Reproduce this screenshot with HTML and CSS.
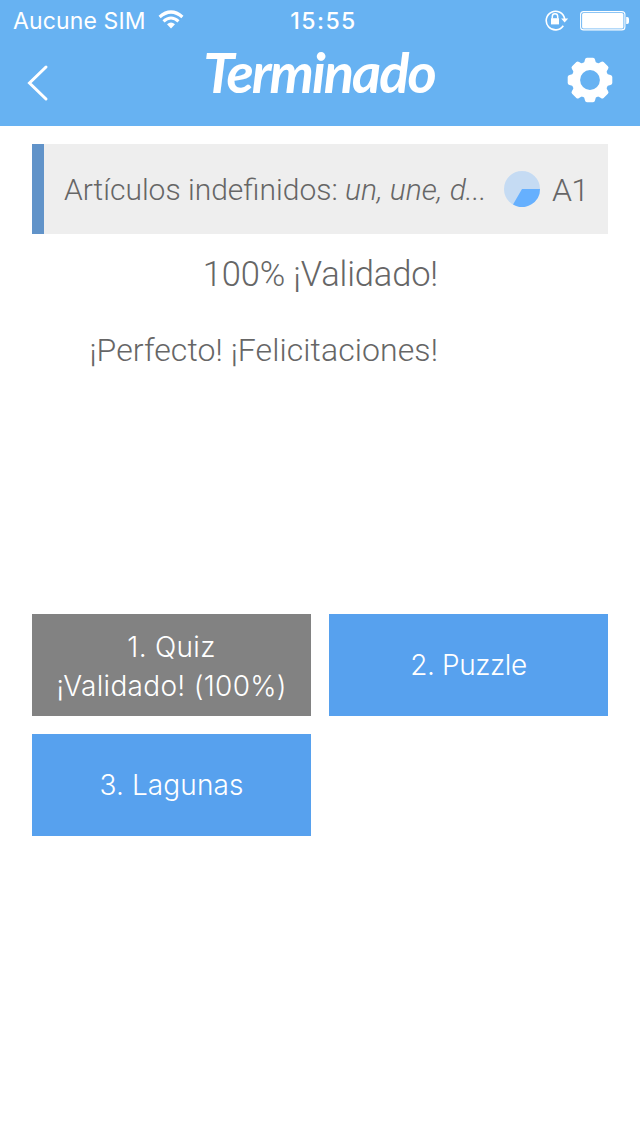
FILE: index.html
```html
<!DOCTYPE html>
<html lang="es">
<head>
<meta charset="utf-8">
<title>Terminado</title>
<link rel="stylesheet" href="styles.css">
</head>
<body>
<header class="header">
  <div class="status">
    <div class="carrier">
      <span class="carrier-name">Aucune SIM</span>
      <svg class="wifi" width="26" height="20" viewBox="0 0 26 20" fill="none" stroke="#fff">
        <path d="M1.6 7Q13-3 24.4 7" stroke-width="3.2"/>
        <path d="M5.5 11.3Q13 4.7 20.5 11.3" stroke-width="3.1"/>
        <path d="M9 14.2Q13 10.8 17 14.2L13 18.6Z" fill="#fff" stroke="none"/>
      </svg>
    </div>
    <span class="clock">15:55</span>
    <div class="indicators">
      <svg class="lock" width="24" height="22" viewBox="0 0 24 22" fill="none" stroke="#fff">
        <path d="M18.3 16.7A9.3 9.3 0 1 1 19.7 10" stroke-width="1.6"/>
        <path d="M16.1 9.6H23.2L19.6 13.4Z" fill="#fff" stroke="none"/>
        <path d="M6 9.2H14V15.4H6Z" fill="#fff" stroke="none"/>
        <path d="M7.3 9.5V7.4Q7.3 4.8 10 4.8T12.7 7.4V9.5" stroke-width="1.5"/>
      </svg>
      <svg width="50" height="20" viewBox="0 0 50 20">
        <rect x=".6" y=".6" width="44.3" height="18.3" rx="3" fill="none" stroke="#fff" stroke-width="1.1"/>
        <rect x="2.1" y="2.1" width="41.3" height="15.3" rx="1.5" fill="#fff"/>
        <path d="M46.2 6H47.2Q49 6 49 8V11Q49 13 47.2 13H46.2Z" fill="#fff"/>
      </svg>
    </div>
  </div>
  <div class="nav">
    <svg class="back" width="24" height="38" viewBox="0 0 24 38">
      <path d="M20 3L3.5 19L20 35" fill="none" stroke="#fff" stroke-width="3" stroke-linecap="round" stroke-linejoin="miter"/>
    </svg>
    <h1 class="title">Terminado</h1>
    <svg class="gear" width="46" height="46" viewBox="-23 -23 46 46" fill="#fff">
      <defs><path id="tooth" d="M-6.5-15L-5-20.5Q-4.7-22.3-3-22.3H3Q4.7-22.3 5-20.5L6.5-15Z"/></defs>
      <circle r="14.2" fill="none" stroke="#fff" stroke-width="8.6"/>
      <use href="#tooth"/><use href="#tooth" transform="rotate(45)"/><use href="#tooth" transform="rotate(90)"/><use href="#tooth" transform="rotate(135)"/><use href="#tooth" transform="rotate(180)"/><use href="#tooth" transform="rotate(225)"/><use href="#tooth" transform="rotate(270)"/><use href="#tooth" transform="rotate(315)"/>
    </svg>
  </div>
</header>
<main class="content">
  <section class="lesson">
    <span class="lesson-name">Artículos indefinidos: <em>un, une, d...</em></span>
    <svg class="progress" width="36" height="36" viewBox="-18 -18 36 36">
      <circle r="18" fill="#c5dbf3"/>
      <path d="M0 0H18A18 18 0 0 1-9 15.59Z" fill="#66b0fe"/>
    </svg>
    <span class="level">A1</span>
  </section>
  <section class="result">
    <p class="score">100% ¡Validado!</p>
    <p class="praise">¡Perfecto! ¡Felicitaciones!</p>
  </section>
  <section class="exercises">
    <button class="exercise done"><span>1. Quiz</span><span>¡Validado! (100%)</span></button>
    <button class="exercise puzzle"><span>2. Puzzle</span></button>
    <button class="exercise gaps"><span>3. Lagunas</span></button>
  </section>
</main>
</body>
</html>
```

FILE: styles.css
```css
* { box-sizing: border-box; }
body { margin: 0; background: #fff; color: #666; font-family: Roboto, "Liberation Sans", sans-serif; font-weight: 300; }
.header { height: 126px; background: #67b2f2; color: #fff; }
.status { display: grid; grid-template-columns: 1fr auto 1fr; align-items: center; height: 40px; padding: 1px 10px 0 13px; font: 400 23px/40px Inter, sans-serif; }
.carrier { display: flex; align-items: center; gap: 12px; }
.wifi { margin-top: -2px; }
.carrier-name { letter-spacing: .12px; }
.clock { font-weight: 500; letter-spacing: 1.5px; padding-left: 4px; }
.indicators { display: flex; justify-content: flex-end; align-items: center; gap: 11px; }
.lock { margin-top: -2px; }
.nav { display: flex; justify-content: space-between; align-items: center; height: 80px; padding: 0 27px 0 26px; }
.back { margin-top: 5px; }
.title { margin: -16px 0 0 21px; font: italic 700 56px/70px Lato, "Liberation Sans", sans-serif; letter-spacing: -2px; }
.content { padding: 18px 32px 0; }
.lesson { display: flex; align-items: center; height: 90px; padding: 0 0 0 20px; border-left: 12px solid #6193c9; background: #eee; font-size: 30px; }
.lesson-name { flex: 0 0 440px; padding-top: 1px; white-space: nowrap; }
.progress { flex: none; }
.level { margin: 2px 0 0 12px; font-size: 32px; letter-spacing: -.7px; }
.result { height: 380px; width: 406px; padding-top: 16px; text-align: right; }
.result p { margin: 0; white-space: nowrap; }
.score { font-size: 34.5px; line-height: 48px; letter-spacing: -.15px; }
.result .praise { margin-top: 29px; font-size: 32px; line-height: 46px; letter-spacing: .08px; }
.exercises { display: grid; grid-template-columns: 279px 279px; grid-auto-rows: 102px; gap: 18px; }
.exercise { display: flex; flex-direction: column; align-items: center; justify-content: center; padding: 1px 0 0; border: 0; background: #57a1ee; color: #fff; font: 300 28px/39px Inter, sans-serif; letter-spacing: .3px; white-space: nowrap; }
.done { padding-top: 4px; background: #828282; }
.puzzle { letter-spacing: -.4px; }
.gaps { letter-spacing: .1px; }
```
